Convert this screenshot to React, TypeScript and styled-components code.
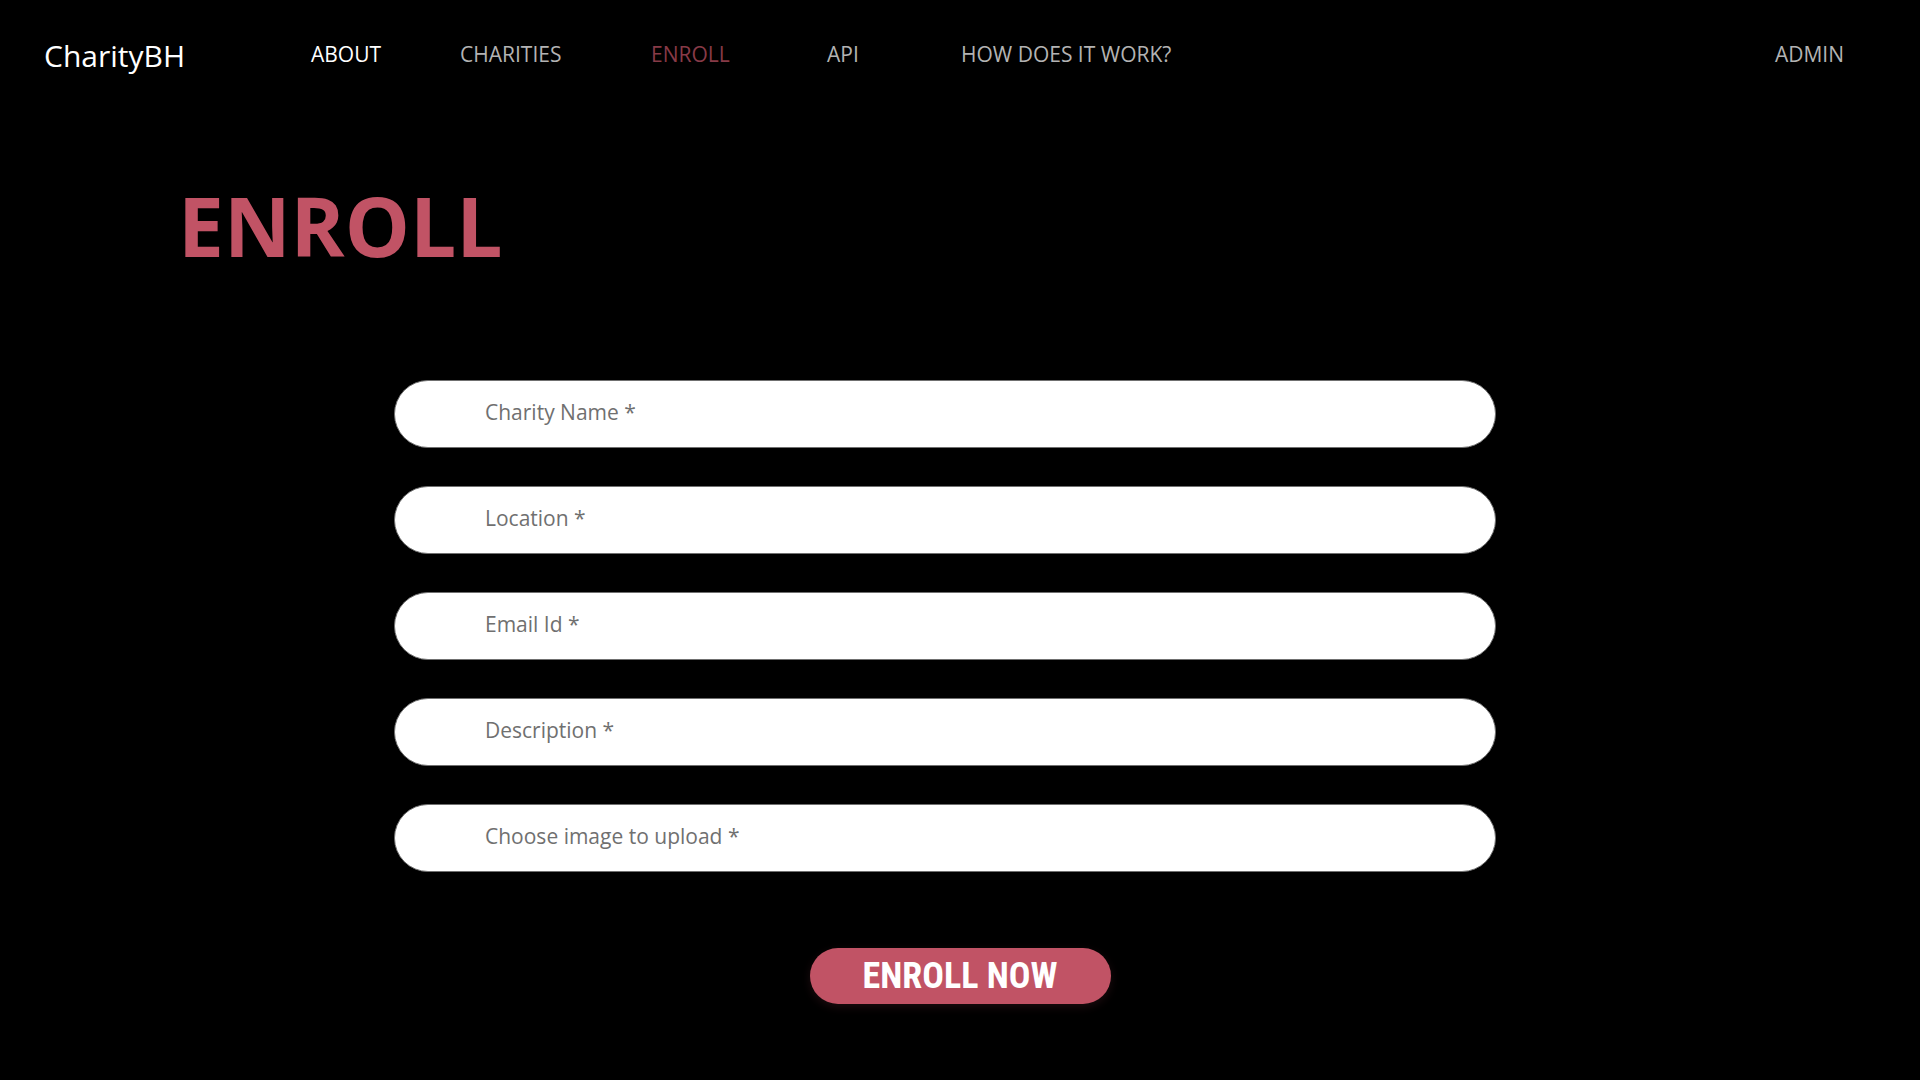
import React from "react";
import styled, { createGlobalStyle } from "styled-components";

const GlobalStyle = createGlobalStyle`
  *, *::before, *::after {
    box-sizing: border-box;
  }
  body {
    margin: 0;
    background: #000;
    color: #fff;
    font-family: "Segoe UI", "Open Sans", "Noto Sans", sans-serif;
  }
`;

const Header = styled.header`
  display: flex;
  align-items: center;
  min-height: 108px;
  padding: 0 76px 0 44px;
`;

const Brand = styled.a`
  width: 267px;
  padding-top: 3px;
  color: #fff;
  font-size: 30px;
  line-height: 40px;
  text-decoration: none;
`;

const Nav = styled.nav`
  display: grid;
  grid-template-columns: 149px 191px 176px 134px auto;
`;

type Tone = "bright" | "muted" | "active";

const tones: Record<Tone, string> = {
  bright: "#ffffff",
  muted: "#b3b3b3",
  active: "#873a47",
};

const NavLink = styled.a<{ $tone: Tone }>`
  color: ${({ $tone }) => tones[$tone]};
  font-size: 21px;
  line-height: 32px;
  text-decoration: none;
  white-space: nowrap;
`;

const AdminSlot = styled.div`
  margin-left: auto;
`;

const Title = styled.h1`
  margin: 59px 0 0 178px;
  color: #c15365;
  font-size: 82px;
  font-weight: 700;
  line-height: 116px;
`;

const Form = styled.form`
  display: flex;
  flex-direction: column;
  align-items: center;
  max-width: 1132px;
  margin: 97px auto 0;
  padding-bottom: 76px;
`;

const Fields = styled.div`
  display: flex;
  flex-direction: column;
  gap: 38px;
  width: 100%;
  padding-right: 30px;
`;

const Field = styled.input`
  width: 100%;
  height: 68px;
  padding: 0 90px 4px;
  border: 1px solid #707070;
  border-radius: 34px;
  background: #fff;
  color: #333;
  font-family: inherit;
  font-size: 21px;

  &::placeholder {
    color: #707070;
    opacity: 1;
  }
`;

const SubmitButton = styled.button`
  width: 301px;
  height: 56px;
  margin-top: 76px;
  padding: 0;
  border: 0;
  border-radius: 28px;
  background: #c15365;
  box-shadow: 0 3px 10px rgba(193, 83, 101, 0.15);
  color: #fff;
  font-family: "Roboto Condensed", "Open Sans Condensed", "Noto Sans CJK JP", sans-serif;
  font-size: 36px;
  font-weight: 700;
  line-height: 56px;
  cursor: pointer;
`;

const links: { label: string; href: string; tone: Tone }[] = [
  { label: "ABOUT", href: "#about", tone: "bright" },
  { label: "CHARITIES", href: "#charities", tone: "muted" },
  { label: "ENROLL", href: "#enroll", tone: "active" },
  { label: "API", href: "#api", tone: "muted" },
  { label: "HOW DOES IT WORK?", href: "#how", tone: "muted" },
];

const fields = [
  { name: "name", type: "text", label: "Charity Name *" },
  { name: "location", type: "text", label: "Location *" },
  { name: "email", type: "email", label: "Email Id *" },
  { name: "description", type: "text", label: "Description *" },
  { name: "image", type: "text", label: "Choose image to upload *" },
];

export default function App() {
  return (
    <>
      <GlobalStyle />
      <Header>
        <Brand href="#home">CharityBH</Brand>
        <Nav>
          {links.map((link) => (
            <NavLink key={link.label} href={link.href} $tone={link.tone}>
              {link.label}
            </NavLink>
          ))}
        </Nav>
        <AdminSlot>
          <NavLink href="#admin" $tone="muted">
            ADMIN
          </NavLink>
        </AdminSlot>
      </Header>
      <main>
        <Title>ENROLL</Title>
        <Form onSubmit={(event) => event.preventDefault()}>
          <Fields>
            {fields.map((field) => (
              <Field
                key={field.name}
                name={field.name}
                type={field.type}
                placeholder={field.label}
                aria-label={field.label}
                required
              />
            ))}
          </Fields>
          <SubmitButton type="submit">ENROLL NOW</SubmitButton>
        </Form>
      </main>
    </>
  );
}
